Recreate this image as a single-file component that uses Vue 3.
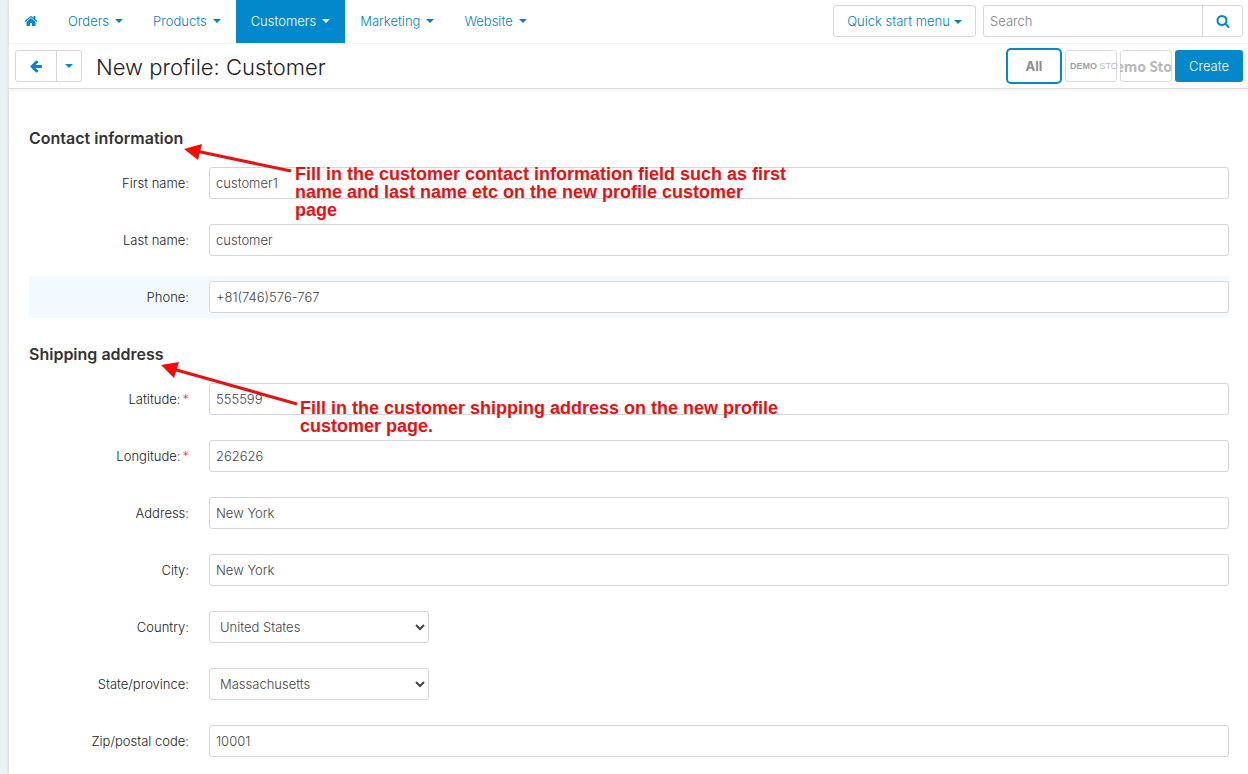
<script setup>
import { reactive, ref } from 'vue'

const menus = [
  { label: 'Orders' },
  { label: 'Products' },
  { label: 'Customers', active: true },
  { label: 'Marketing' },
  { label: 'Website' },
]

const search = ref('')

const contact = reactive([
  { id: 'first-name', label: 'First name:', value: 'customer1' },
  { id: 'last-name', label: 'Last name:', value: 'customer' },
  { id: 'phone', label: 'Phone:', value: '+81(746)576-767', highlighted: true },
])

const shipping = reactive([
  { id: 'latitude', label: 'Latitude:', value: '555599', required: true },
  { id: 'longitude', label: 'Longitude:', value: '262626', required: true },
  { id: 'address', label: 'Address:', value: 'New York' },
  { id: 'city', label: 'City:', value: 'New York' },
  { id: 'country', label: 'Country:', value: 'United States', options: ['United States'] },
  { id: 'state', label: 'State/province:', value: 'Massachusetts', options: ['Massachusetts'] },
  { id: 'zip', label: 'Zip/postal code:', value: '10001' },
])
</script>

<template>
  <div class="page">
    <header>
      <nav class="navbar">
        <a class="nav-item home" href="#" aria-label="Home">
          <svg class="icon" viewBox="0 0 1792 1792"><path d="M1472 992v480q0 26-19 45t-45 19h-384v-384h-256v384h-384q-26 0-45-19t-19-45v-480q0-1 .5-3t.5-3l575-474 575 474q1 2 1 6zm223-69l-62 74q-8 9-21 11h-3q-13 0-21-7l-692-577-692 577q-12 8-24 7-13-2-21-11l-62-74q-8-10-7-23.5t11-21.5l719-599q32-26 76-26t76 26l244 204v-195q0-14 9-23t23-9h192q14 0 23 9t9 23v408l219 182q10 8 11 21.5t-7 23.5z" /></svg>
        </a>
        <a v-for="m in menus" :key="m.label" class="nav-item" :class="{ active: m.active }" href="#">
          {{ m.label }}<span class="caret"></span>
        </a>
        <div class="nav-tools">
          <button class="btn quick" type="button">Quick start menu<span class="caret"></span></button>
          <form class="search" @submit.prevent>
            <input v-model="search" type="text" placeholder="Search" aria-label="Search" />
            <button type="submit" aria-label="Submit search">
              <svg class="icon" viewBox="0 0 1792 1792"><path d="M1216 832q0-185-131.5-316.5t-316.5-131.5-316.5 131.5-131.5 316.5 131.5 316.5 316.5 131.5 316.5-131.5 131.5-316.5zm512 832q0 52-38 90t-90 38q-54 0-90-38l-343-342q-179 124-399 124-143 0-273.5-55.5t-225-150-150-225-55.5-273.5 55.5-273.5 150-225 225-150 273.5-55.5 273.5 55.5 225 150 150 225 55.5 273.5q0 220-124 399l343 343q37 37 37 90z" /></svg>
            </button>
          </form>
        </div>
      </nav>

      <div class="titlebar">
        <div class="back-group">
          <button class="back" type="button" aria-label="Back">
            <svg class="icon" viewBox="0 0 1792 1792"><path d="M1664 896v128q0 53-32.5 90.5t-84.5 37.5h-704l293 294q38 36 38 90t-38 90l-75 76q-37 37-90 37-52 0-91-37l-651-652q-37-37-37-90 0-52 37-91l651-650q38-38 91-38 52 0 90 38l75 74q38 38 38 91t-38 91l-293 293h704q52 0 84.5 37.5t32.5 90.5z" /></svg>
          </button>
          <button class="history" type="button" aria-label="History"><span class="caret"></span></button>
        </div>
        <h1>New profile: Customer</h1>
        <div class="stores">
          <button class="store selected" type="button">All</button>
          <button class="store small" type="button"><b>DEMO</b>&nbsp;STO</button>
          <button class="store large" type="button">emo Sto</button>
          <button class="create" type="button">Create</button>
        </div>
      </div>
    </header>

    <main>
      <section>
        <h2>Contact information</h2>
        <div v-for="f in contact" :key="f.id" class="row" :class="{ highlighted: f.highlighted }">
          <label :for="f.id">{{ f.label }}</label>
          <input :id="f.id" v-model="f.value" class="control" type="text" />
        </div>
        <svg class="arrow arrow-contact" width="110" height="34" viewBox="0 0 110 34">
          <path class="shaft" d="M12 8L107 28" />
          <path class="head" d="M0 6L18 1L14 17Z" />
        </svg>
        <p class="note note-contact">Fill in the customer contact information field such as first name and last name etc on the new profile customer page</p>
      </section>

      <section>
        <h2>Shipping address</h2>
        <div v-for="f in shipping" :key="f.id" class="row">
          <label :for="f.id">{{ f.label }}<span v-if="f.required" class="required">*</span></label>
          <select v-if="f.options" :id="f.id" v-model="f.value" class="control select">
            <option v-for="o in f.options" :key="o">{{ o }}</option>
          </select>
          <input v-else :id="f.id" v-model="f.value" class="control" type="text" />
        </div>
        <svg class="arrow arrow-shipping" width="140" height="46" viewBox="0 0 140 46">
          <path class="shaft" d="M12 8L136 43" />
          <path class="head" d="M0 4L18 1L13 17Z" />
        </svg>
        <p class="note note-shipping">Fill in the customer shipping address on the new profile customer page.</p>
      </section>
    </main>
  </div>
</template>

<style>
html {
  background: #eff0f2;
}
body {
  margin: 0;
}
</style>

<style scoped>
.page {
  box-sizing: border-box;
  min-height: 100vh;
  margin-left: 9px;
  background: #fff;
  box-shadow: 0 0 3px #c4c8cc;
  color: #222;
  font-family: Inter, "Liberation Sans", sans-serif;
  font-size: 13px;
  font-weight: 300;
  line-height: 20px;
}
button, input, select {
  box-sizing: border-box;
  margin: 0;
  font: inherit;
}
button {
  padding: 0;
  border: 0;
  background: none;
  color: #0388cc;
  cursor: pointer;
}
.icon {
  display: block;
  width: 14px;
  height: 14px;
  fill: #0388cc;
}
.caret {
  display: inline-block;
  margin-left: 6px;
  border: 4px solid transparent;
  border-top-color: currentColor;
  border-bottom: 0;
  vertical-align: middle;
}
.navbar {
  display: flex;
  height: 43px;
  padding-right: 5px;
  border-bottom: 1px solid #f4f4f4;
}
.nav-item {
  display: flex;
  align-items: center;
  padding: 0 15px 1px;
  color: #0380c0;
  text-decoration: none;
}
.nav-item.active {
  background: #0388cc;
  color: #fff;
}
.nav-tools {
  display: flex;
  gap: 7px;
  align-items: center;
  margin-left: auto;
  padding-bottom: 1px;
}
.btn, .search, .back-group {
  box-sizing: border-box;
  height: 32px;
  border: 1px solid #d3d7db;
  border-radius: 3px;
}
.quick {
  width: 143px;
  color: #0380c0;
}
.quick .caret {
  margin-left: 4px;
}
.search {
  display: flex;
  width: 260px;
}
.search input {
  flex: 1;
  min-width: 0;
  padding: 0 6px;
  border: 0;
  background: none;
}
.search input::placeholder {
  color: #808080;
}
.search button {
  display: grid;
  place-items: center;
  width: 40px;
  border-left: 1px solid #d3d7db;
}
.titlebar {
  display: flex;
  align-items: center;
  height: 44px;
  padding: 0 5px 0 6px;
  border-bottom: 1px solid #dcdcdc;
  box-shadow: 0 2px 2px #f4f4f4;
}
.back-group {
  display: flex;
  width: 67px;
}
.back {
  display: grid;
  flex: 1;
  place-items: center;
}
.history {
  display: grid;
  place-items: center;
  width: 25px;
  border-left: 1px solid #d3d7db;
}
.history .caret {
  margin: 0;
}
h1 {
  margin: 0 0 0 14px;
  padding-top: 2px;
  font-size: 22px;
  font-weight: 300;
  line-height: 32px;
}
.stores {
  display: flex;
  gap: 3px;
  align-items: center;
  margin-left: auto;
}
.store {
  display: flex;
  align-items: center;
  justify-content: center;
  width: 52px;
  height: 32px;
  border-radius: 4px;
  box-shadow: inset 0 0 0 1px #dadce3;
  color: #b8b8b8;
  white-space: nowrap;
}
.store.selected {
  width: 56px;
  height: 36px;
  border-radius: 5px;
  box-shadow: inset 0 0 0 2px #0388cc;
  color: #8c8c8c;
  font-weight: 700;
}
.store.small {
  justify-content: flex-start;
  padding-left: 5px;
  font-family: "Liberation Sans", sans-serif;
  font-size: 9px;
}
.store.small b {
  color: #a0a0a0;
  font-weight: 700;
}
.store.large {
  justify-content: flex-end;
  overflow: hidden;
  font-family: "Noto Sans CJK JP", sans-serif;
  font-size: 14px;
  font-weight: 700;
}
.create {
  width: 68px;
  height: 32px;
  border-radius: 3px;
  background: #0388cc;
  color: #fff;
}
main {
  padding: 13px 19px 12px 20px;
}
section {
  position: relative;
}
h2 {
  margin: 0 0 12px;
  padding-top: 24px;
  color: #333;
  font-size: 16px;
  font-weight: 600;
  line-height: 24px;
}
.row {
  display: flex;
  align-items: center;
  margin-bottom: 15px;
  padding: 5px 0;
}
.row:has(+ .arrow) {
  margin-bottom: 0;
}
.highlighted {
  background: #f3faff;
}
label {
  width: 160px;
  margin-right: 20px;
  text-align: right;
}
.required {
  margin-left: 2px;
  color: #ee3a5c;
}
.control {
  flex: 1;
  min-width: 0;
  height: 32px;
  padding: 0 6px;
  border: 1px solid #d3d7db;
  border-radius: 3px;
  background: #fff;
  color: #444;
}
.select {
  flex: 0 0 220px;
}
.arrow, .note {
  position: absolute;
  pointer-events: none;
}
.arrow-contact {
  top: 41px;
  left: 155px;
}
.arrow-shipping {
  top: 43px;
  left: 132px;
}
.shaft {
  fill: none;
  stroke: #e51414;
  stroke-width: 3;
}
.head {
  fill: #f90808;
}
.note {
  margin: 0;
  color: #ea1010;
  font-family: "Liberation Sans", Arial, sans-serif;
  font-size: 18px;
  font-weight: 700;
  line-height: 18px;
}
.note-contact {
  top: 63px;
  left: 266px;
  width: 492px;
}
.note-shipping {
  top: 81px;
  left: 271px;
  width: 492px;
}
</style>
